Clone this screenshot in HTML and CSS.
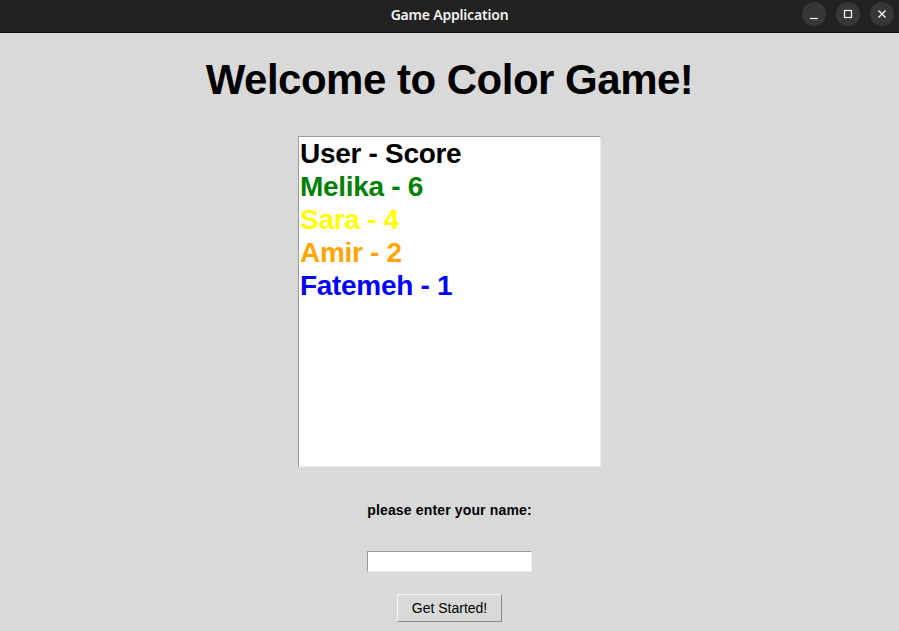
FILE: index.html
```
<!DOCTYPE html>
<html>
<head>
<meta charset="utf-8">
<title>Game Application</title>
<link rel="stylesheet" href="styles.css">
</head>
<body>
<div class="titlebar">
  <div class="title">Game Application</div>
  <div class="controls">
    <span class="ctl"><svg width="24" height="24" viewBox="0 0 24 24"><line x1="8" y1="16.5" x2="16" y2="16.5" stroke="#fff" stroke-width="1.2"/></svg></span>
    <span class="ctl"><svg width="24" height="24" viewBox="0 0 24 24"><rect x="8.5" y="8.5" width="7" height="7" fill="none" stroke="#fff" stroke-width="1.2"/></svg></span>
    <span class="ctl"><svg width="24" height="24" viewBox="0 0 24 24"><path d="M8.5 8.5 L15.5 15.5 M15.5 8.5 L8.5 15.5" stroke="#fff" stroke-width="1.3"/></svg></span>
  </div>
</div>
<main class="app">
  <h1 class="heading">Welcome to Color Game!</h1>
  <div class="listbox">
    <div class="row black">User - Score</div>
    <div class="row green">Melika - 6</div>
    <div class="row yellow">Sara - 4</div>
    <div class="row orange">Amir - 2</div>
    <div class="row blue">Fatemeh - 1</div>
  </div>
  <div class="label">please enter your name:</div>
  <input class="entry" type="text">
  <button class="btn">Get Started!</button>
</main>
</body>
</html>
```
FILE: styles.css
```
html, body {
  margin: 0;
  padding: 0;
}
body {
  background: #d9d9d9;
  width: 899px;
  height: 631px;
  overflow: hidden;
  font-family: "Liberation Sans", Arial, sans-serif;
}
.titlebar {
  height: 32px;
  background: #222222;
  border-bottom: 1px solid #0e0e0e;
  position: relative;
  display: flex;
  align-items: center;
  justify-content: center;
}
.title {
  color: #f2f2f2;
  font-family: "Noto Sans", sans-serif;
  font-weight: 600;
  font-size: 14px;
  letter-spacing: -0.2px;
  margin-top: -4px;
}
.controls {
  position: absolute;
  right: 5px;
  top: 2px;
  display: flex;
  gap: 10px;
}
.ctl {
  width: 24px;
  height: 24px;
  border-radius: 50%;
  background: #373737;
  display: block;
}
.ctl svg { display: block; }
.app {
  display: flex;
  flex-direction: column;
  align-items: center;
}
.heading {
  margin: 23px 0 0;
  font-size: 42px;
  line-height: 48px;
  letter-spacing: -0.5px;
  font-weight: bold;
  color: #000;
}
.listbox {
  margin-top: 32px;
  box-sizing: border-box;
  width: 303px;
  height: 331px;
  background: #fff;
  border-top: 1px solid #9a9a9a;
  border-left: 1px solid #9a9a9a;
  border-right: 1px solid #ececec;
  border-bottom: 1px solid #ececec;
  padding-left: 1px;
}
.row {
  font-size: 28px;
  line-height: 33px;
  letter-spacing: -0.3px;
  font-weight: bold;
  white-space: nowrap;
}
.black { color: #000; }
.green { color: #008000; }
.yellow { color: #ffff00; }
.orange { color: #ffa500; }
.blue { color: #0000ff; }
.label {
  margin-top: 35px;
  font-size: 14px;
  line-height: 17px;
  letter-spacing: 0.15px;
  font-weight: bold;
  color: #000;
}
.entry {
  margin-top: 32px;
  box-sizing: border-box;
  width: 165px;
  height: 21px;
  background: #fff;
  border-top: 1px solid #999;
  border-left: 1px solid #999;
  border-right: 1px solid #ececec;
  border-bottom: 1px solid #ececec;
  padding: 0;
  outline: none;
}
.btn {
  margin-top: 22px;
  box-sizing: border-box;
  width: 105px;
  height: 28px;
  background: #d9d9d9;
  border-top: 1px solid #f4f4f4;
  border-left: 1px solid #f4f4f4;
  border-right: 1px solid #8c8c8c;
  border-bottom: 1px solid #8c8c8c;
  font-family: "Liberation Sans", Arial, sans-serif;
  font-size: 14px;
  color: #000;
  padding: 0;
}
```
